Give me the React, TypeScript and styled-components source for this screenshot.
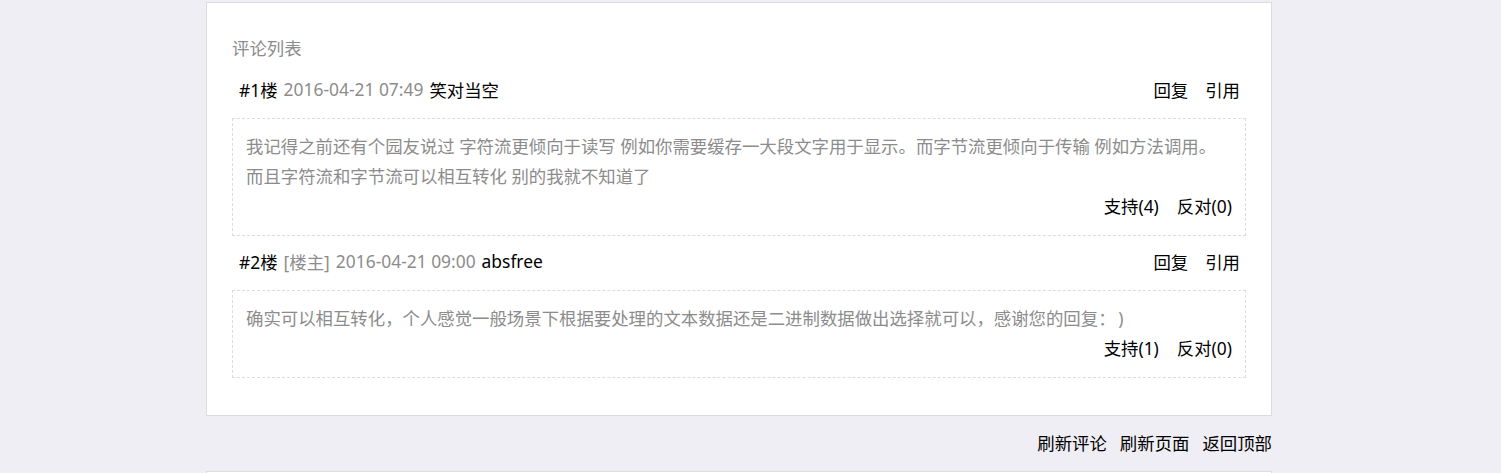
import React from "react";
import styled, { createGlobalStyle } from "styled-components";

const Global = createGlobalStyle`
  html, body { margin: 0; padding: 0; }
  body {
    background: #efeef4;
    font-family: "Noto Sans", "Noto Sans CJK SC", sans-serif;
    font-size: 17.4px;
    color: #000;
  }
`;

const Page = styled.div`
  width: 1066px;
  margin-left: 206px;
  padding-top: 2px;
`;

const Card = styled.section`
  box-sizing: border-box;
  background: #fff;
  border: 1px solid #dcdcdc;
  padding: 29px 25px 37px;
`;

const Title = styled.h3`
  margin: 0;
  font-size: 17.4px;
  font-weight: normal;
  line-height: 32px;
  color: #8c8c8c;
`;

const Header = styled.div`
  box-sizing: border-box;
  height: 54px;
  display: flex;
  align-items: center;
  justify-content: space-between;
  padding: 0 6px 3px 7px;
`;

const Meta = styled.div`
  display: flex;
  gap: 6px;
  white-space: nowrap;
`;

const Gray = styled.span`
  color: #8c8c8c;
`;

const Wide = styled.span`
  display: inline-block;
  width: 1.15em;
  font-family: "Noto Sans CJK SC", sans-serif;
`;

const Actions = styled.div`
  display: flex;
  gap: 17px;
`;

const Link = styled.a`
  color: #000;
  text-decoration: none;
  cursor: pointer;
`;

const Body = styled.div`
  border: 1px dashed #dcdcdc;
  padding: 12px 13px 14px;
`;

const Text = styled.p`
  margin: 0;
  line-height: 30px;
  color: #8c8c8c;
`;

const Votes = styled.div`
  display: flex;
  justify-content: flex-end;
  gap: 18px;
  line-height: 30px;
`;

const Footer = styled.div`
  box-sizing: border-box;
  height: 55px;
  display: flex;
  align-items: center;
  justify-content: flex-end;
  gap: 13px;
  padding-bottom: 2px;
`;

const NextCard = styled.div`
  background: #fff;
  border: 1px solid #dcdcdc;
  height: 40px;
`;

type Comment = {
  floor: number;
  owner?: boolean;
  date: string;
  author: string;
  lines: React.ReactNode[];
  up: number;
  down: number;
};

const comments: Comment[] = [
  {
    floor: 1,
    date: "2016-04-21 07:49",
    author: "笑对当空",
    lines: [
      "我记得之前还有个园友说过 字符流更倾向于读写 例如你需要缓存一大段文字用于显示。而字节流更倾向于传输 例如方法调用。",
      "而且字符流和字节流可以相互转化 别的我就不知道了",
    ],
    up: 4,
    down: 0,
  },
  {
    floor: 2,
    owner: true,
    date: "2016-04-21 09:00",
    author: "absfree",
    lines: [
      <>
        确实可以相互转化，个人感觉一般场景下根据要处理的文本数据还是二进制数据做出选择就可以，感谢您的回复<Wide>：</Wide>)
      </>,
    ],
    up: 1,
    down: 0,
  },
];

export default function App() {
  return (
    <>
      <Global />
      <Page>
        <Card>
          <Title>评论列表</Title>
          {comments.map((c) => (
            <div key={c.floor}>
              <Header>
                <Meta>
                  <span>#{c.floor}楼</span>
                  {c.owner && <Gray>[楼主]</Gray>}
                  <Gray>{c.date}</Gray>
                  <span>{c.author}</span>
                </Meta>
                <Actions>
                  <Link>回复</Link>
                  <Link>引用</Link>
                </Actions>
              </Header>
              <Body>
                <Text>
                  {c.lines.map((l, i) => (
                    <React.Fragment key={i}>
                      {i > 0 && <br />}
                      {l}
                    </React.Fragment>
                  ))}
                </Text>
                <Votes>
                  <Link>支持({c.up})</Link>
                  <Link>反对({c.down})</Link>
                </Votes>
              </Body>
            </div>
          ))}
        </Card>
        <Footer>
          <Link>刷新评论</Link>
          <Link>刷新页面</Link>
          <Link>返回顶部</Link>
        </Footer>
        <NextCard />
      </Page>
    </>
  );
}
